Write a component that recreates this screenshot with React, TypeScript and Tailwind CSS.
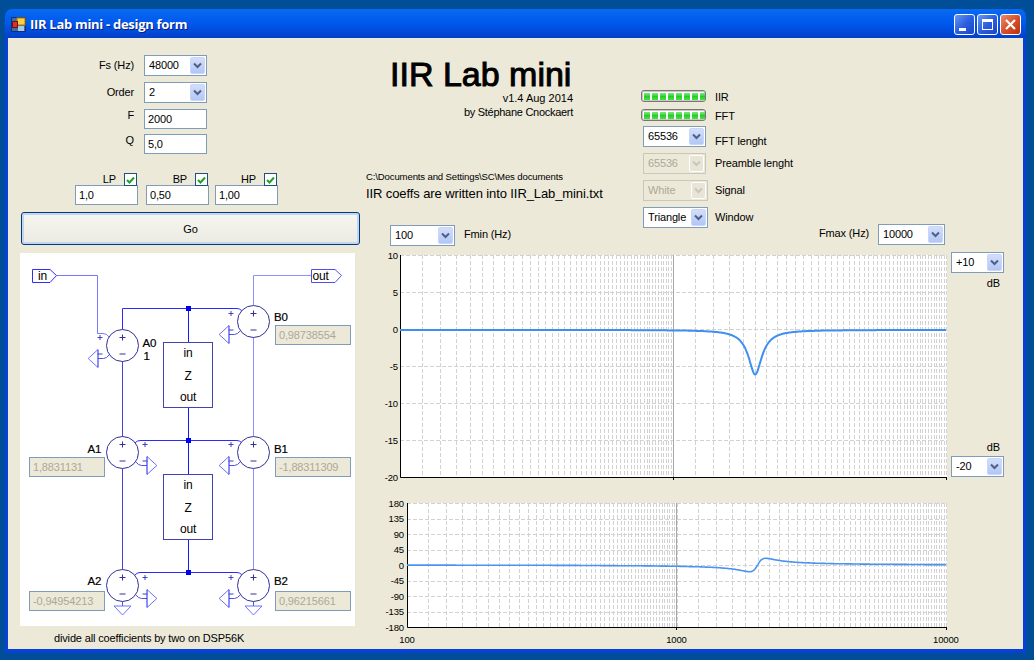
const B0 = 0.98738554;
const B1 = -1.88311309;
const B2 = 0.96215661;
const A1 = 1.8831131;
const A2 = -0.94954213;
const FS = 48000;

// frequency response of the biquad, gain in dB and phase in degrees
const response = (f: number) => {
  const w = (2 * Math.PI * f) / FS;
  const nr = B0 + B1 * Math.cos(w) + B2 * Math.cos(2 * w);
  const ni = -(B1 * Math.sin(w) + B2 * Math.sin(2 * w));
  const dr = 1 - A1 * Math.cos(w) - A2 * Math.cos(2 * w);
  const di = A1 * Math.sin(w) + A2 * Math.sin(2 * w);
  const db = 10 * Math.log10((nr * nr + ni * ni) / (dr * dr + di * di));
  const deg = ((Math.atan2(ni, nr) - Math.atan2(di, dr)) * 180) / Math.PI;
  return { db, deg };
};

const logX = (f: number, left: number, right: number) => left + ((right - left) * (Math.log10(f) - 2)) / 2;

const minorFreqs: number[] = [];
for (const decade of [100, 1000]) {
  for (let m = 1.2; m < 10.01; m += 0.2) minorFreqs.push(decade * m);
}

const sweep = Array.from({ length: 700 }, (_, i) => 100 * Math.pow(100, i / 699));

const Chevron = ({ disabled }: { disabled?: boolean }) => (
  <svg width="9" height="7" viewBox="0 0 9 7" className="block">
    <path d="M1 1.5 L4.5 5 L8 1.5" fill="none" stroke={disabled ? '#c9c7ba' : '#4d6185'} strokeWidth="2" />
  </svg>
);

const Combo = ({ value, className, disabled }: { value: string; className: string; disabled?: boolean }) => (
  <div
    className={`flex h-[21px] shrink-0 items-center justify-between border pl-[4px] pr-[1px] ${
      disabled ? 'border-[#c9c7ba] bg-[#ece9d8] text-[#aca899]' : 'border-[#7f9db9] bg-white text-black'
    } ${className}`}
  >
    <span>{value}</span>
    <div
      className={`flex h-[17px] w-[15px] items-center justify-center rounded-[2px] border ${
        disabled ? 'border-white bg-[#e8e5d6]' : 'border-[#c8d6fb] bg-gradient-to-b from-[#d3def9] to-[#b2c7f7]'
      }`}
    >
      <Chevron disabled={disabled} />
    </div>
  </div>
);

const TextBox = ({ value, className }: { value: string; className: string }) => (
  <input
    readOnly
    value={value}
    className={`h-[20px] border border-[#7f9db9] bg-white px-[3px] text-[11px] text-black outline-none ${className}`}
  />
);

const Coeff = ({ value, className }: { value: string; className: string }) => (
  <input
    readOnly
    value={value}
    className={`absolute h-[20px] w-[76px] border border-[#7f9db9] bg-[#ece9d8] px-[3px] text-[11px] text-[#aca899] outline-none ${className}`}
  />
);

const Check = ({ label }: { label: string }) => (
  <div className="flex h-[12px] items-start justify-end gap-[8px] pr-[1px]">
    <span className="leading-[13px]">{label}</span>
    <div className="relative z-10 flex h-[13px] w-[13px] items-center justify-center border border-[#1c5180] bg-white">
      <svg width="9" height="8" viewBox="0 0 9 8">
        <path d="M1 4 L3.5 6.5 L8 1.5" fill="none" stroke="#21a121" strokeWidth="2" />
      </svg>
    </div>
  </div>
);

const Progress = () => (
  <div className="flex h-[12px] w-[65px] items-center gap-[2px] overflow-hidden rounded-[3px] border border-[#777777] bg-white pl-[2px] shadow-[inset_0_0_0_1px_#c8c8c0]">
    {[0, 1, 2, 3, 4, 5, 6, 7].map((i) => (
      <div key={i} className="h-[7px] w-[6px] shrink-0 bg-gradient-to-b from-[#7ce87c] via-[#22d022] to-[#4cdc4c]" />
    ))}
  </div>
);

const Triangle = ({ tip, base, y }: { tip: number; base: number; y: number }) => (
  <>
    <path d={`M${base} ${y - 9} L${tip} ${y} L${base} ${y + 9}`} fill="none" stroke="#7070ff" />
    <path d={`M${base} ${y - 9} V${y + 9}`} stroke="#2020e8" />
  </>
);

const Sum = ({ cx, cy, dir }: { cx: number; cy: number; dir: 1 | -1 }) => {
  const base = cx + dir * 24.5;
  const sign = cx + dir * 22.5;
  const y = cy + 13;
  return (
    <g>
      <path d={`M${base} ${y} H${cx + dir * 19} Q${cx + dir * 16} ${y} ${cx + dir * 13} ${cy + 9}`} fill="none" stroke="#5050f0" />
      <Triangle tip={cx + dir * 34.3} base={base} y={y} />
      <circle cx={cx} cy={cy} r="16" fill="white" stroke="#303098" />
      <path d={`M${cx - 3} ${cy - 8} H${cx + 3} M${cx} ${cy - 11} V${cy - 5} M${cx - 3} ${cy + 8.5} H${cx + 3}`} stroke="#303098" />
      <path d={`M${sign - 2.5} ${cy - 8} H${sign + 2.5} M${sign} ${cy - 10.5} V${cy - 5.5} M${sign - 2.5} ${cy + 8.5} H${sign + 2.5}`} stroke="#4040c0" />
    </g>
  );
};

const DelayBox = ({ y }: { y: number }) => (
  <g>
    <rect x="163.5" y={y} width="49" height="65" fill="white" stroke="#4444b0" />
    <text x="188" y={y + 10.5} textAnchor="middle" dominantBaseline="central" className="text-[12px]">in</text>
    <text x="188" y={y + 33} textAnchor="middle" dominantBaseline="central" className="text-[12px]">Z</text>
    <text x="188" y={y + 54} textAnchor="middle" dominantBaseline="central" className="text-[12px]">out</text>
  </g>
);

const Node = ({ y }: { y: number }) => <rect x="186" y={y - 2.5} width="5" height="5" fill="#0000f0" />;

const Tag = ({ x, y, children }: { x: number; y: number; children: string }) => (
  <text x={x} y={y} dominantBaseline="central" stroke="black" strokeWidth="0.2" className="text-[11.5px]">{children}</text>
);

const Diagram = () => (
  <div className="relative ml-[12px] mt-[8px] h-[373px] w-[335px] bg-white">
    <svg width="335" height="373" viewBox="20 253 335 373" className="block">
      {/* wires */}
      <g fill="none" strokeWidth="1">
        <path d="M56.5 275.5 H97.5 V333.5 H103 Q107 333.5 109 337" stroke="#7777ff" />
        <path d="M253.5 305 V275.5 H311.5" stroke="#8f8fff" />
        <path d="M122.5 330 V308.5 H237 Q240 308.5 242 311" stroke="#2a2aff" />
        <path d="M135 443 Q137 440.5 140 440.5 H237 Q240 440.5 242 443" stroke="#2a2aff" />
        <path d="M135 575 Q137 572.5 140 572.5 H237 Q240 572.5 242 575" stroke="#2a2aff" />
        <path d="M188.5 308.5 V342 M188.5 407 V474 M188.5 539 V572" stroke="#1818f0" />
        <path d="M122.5 361 V437 M122.5 468 V570" stroke="#4444dd" />
        <path d="M253.5 337 V437 M253.5 468 V570" stroke="#8f8fff" />
        <path d="M122.5 601 V606 M253.5 601 V606" stroke="#5050f0" />
        <path d="M114 606 H131 L122.5 615 Z M245 606 H262 L253.5 615 Z" stroke="#7070ff" />
      </g>

      {/* ports */}
      <path d="M32.5 269.5 H50 L56.5 275.5 L50 282.5 H32.5 Z" fill="white" stroke="#3030f0" />
      <path d="M311.5 269.5 H335 L341.5 275.5 L335 282.5 H311.5 Z" fill="white" stroke="#5050f0" />
      <text x="38" y="276" dominantBaseline="central" className="text-[12px]">in</text>
      <text x="312.5" y="276" dominantBaseline="central" className="text-[12px]">out</text>

      <Sum cx={122.5} cy={345.5} dir={-1} />
      <Sum cx={253.5} cy={321.5} dir={-1} />
      <Sum cx={122.5} cy={452.5} dir={1} />
      <Sum cx={253.5} cy={452.5} dir={-1} />
      <Sum cx={122.5} cy={585.5} dir={1} />
      <Sum cx={253.5} cy={585.5} dir={-1} />

      <DelayBox y={342.5} />
      <DelayBox y={474.5} />
      <Node y={308.5} />
      <Node y={440.5} />
      <Node y={572.5} />

      <Tag x={142.5} y={342.5}>A0</Tag>
      <Tag x={143.5} y={355.5}>1</Tag>
      <Tag x={274} y={317}>B0</Tag>
      <Tag x={87.5} y={449}>A1</Tag>
      <Tag x={274} y={449}>B1</Tag>
      <Tag x={87.5} y={581}>A2</Tag>
      <Tag x={274} y={581}>B2</Tag>
    </svg>
    <Coeff value="0,98738554" className="left-[255px] top-[72px]" />
    <Coeff value="1,8831131" className="left-[9px] top-[204px]" />
    <Coeff value="-1,88311309" className="left-[255px] top-[204px]" />
    <Coeff value="-0,94954213" className="left-[9px] top-[338px]" />
    <Coeff value="0,96215661" className="left-[255px] top-[338px]" />
  </div>
);

const Grid = ({ left, right, top, bottom, rows }: { left: number; right: number; top: number; bottom: number; rows: number[] }) => {
  const decade = Math.floor(logX(1000, left, right)) + 0.5;
  return (
    <g>
      <rect x={left} y={top} width={right - left + 1} height={bottom - top} fill="white" />
      <g stroke="#d2d2d2" strokeDasharray="4 2" fill="none">
        {minorFreqs.map((f) => {
          const x = Math.round(logX(f, left, right)) + 0.5;
          return <path key={f} d={`M${x} ${top} V${bottom}`} />;
        })}
        {rows.map((y) => (
          <path key={y} d={`M${left} ${Math.round(y) + 0.5} H${right + 1}`} />
        ))}
      </g>
      <path d={`M${decade} ${top} V${bottom}`} stroke="#a8a8a8" />
      <path d={`M${left + 0.5} ${top} V${bottom + 0.5} H${right + 1}`} fill="none" stroke="black" />
      <path d={`M${right + 0.5} ${bottom} V${bottom + 3} M${decade} ${bottom} V${bottom + 3}`} stroke="black" />
    </g>
  );
};

const GainChart = () => {
  const labels = ['10', '5', '0', '-5', '-10', '-15', '-20'];
  const ys = labels.map((_, i) => 255 + i * 37);
  const points = sweep.map((f) => `${logX(f, 400, 946).toFixed(1)},${(330 - response(f).db * 7.4).toFixed(1)}`).join(' ');
  return (
    <svg width="591" height="232" viewBox="360 250 591 232" className="block">
      <Grid left={400} right={946} top={255} bottom={477} rows={ys} />
      {labels.map((label, i) => (
        <text key={label} x="398" y={ys[i] + 0.5} textAnchor="end" dominantBaseline="central" className="text-[9.5px]">{label}</text>
      ))}
      <polyline points={points} fill="none" stroke="#3f8ff0" strokeWidth="2" />
    </svg>
  );
};

const PhaseChart = () => {
  const labels = ['180', '135', '90', '45', '0', '-45', '-90', '-135', '-180'];
  const ys = labels.map((_, i) => 503 + i * 15.5);
  const points = sweep.map((f) => `${logX(f, 407, 946).toFixed(1)},${(565 - response(f).deg * 0.3444).toFixed(1)}`).join(' ');
  return (
    <svg width="591" height="150" viewBox="360 495 591 150" className="mt-[13px] block overflow-visible">
      <Grid left={407} right={946} top={503} bottom={627} rows={ys} />
      {labels.map((label, i) => (
        <text key={label} x="404" y={ys[i]} textAnchor="end" dominantBaseline="central" className="text-[9.5px]">{label}</text>
      ))}
      <polyline points={points} fill="none" stroke="#4a94f0" strokeWidth="1.6" />
      <text x="407" y="639" textAnchor="middle" dominantBaseline="central" className="text-[9.5px]">100</text>
      <text x="676.5" y="639" textAnchor="middle" dominantBaseline="central" className="text-[9.5px]">1000</text>
      <text x="933" y="639" dominantBaseline="central" className="text-[9.5px]">10000</text>
    </svg>
  );
};

const AppIcon = () => (
  <svg width="15" height="15" viewBox="0 0 15 15" className="block shrink-0">
    <rect x="0.5" y="0.5" width="14" height="14" fill="#3a6ea5" stroke="#12306a" />
    <rect x="6" y="1" width="8" height="7" fill="#ffd040" stroke="#a87a10" />
    <rect x="1.5" y="4.5" width="5" height="6" fill="#d8302a" stroke="#701010" />
    <rect x="7" y="9" width="6" height="5" fill="#a8c8ec" />
  </svg>
);

const WinButton = ({ children, close }: { children: React.ReactNode; close?: boolean }) => (
  <div
    className={`flex h-[21px] w-[21px] items-center justify-center rounded-[3px] border border-white ${
      close ? 'bg-gradient-to-br from-[#e88a6c] via-[#d8502a] to-[#b83010]' : 'bg-gradient-to-br from-[#6a96f0] via-[#2c5fe0] to-[#1c44c8]'
    }`}
  >
    {children}
  </div>
);

const FormRow = ({ label, className, labelClass, children }: { label: string; className?: string; labelClass?: string; children: React.ReactNode }) => (
  <div className={`flex items-center ${className ?? ''}`}>
    <span className={`w-[126px] text-right ${labelClass ?? ''}`}>{label}</span>
    <div className="ml-[10px] flex">{children}</div>
  </div>
);

export default function App() {
  return (
    <div className="h-[660px] w-[1034px] overflow-hidden bg-[#004e98] pl-[5px] pt-[9px] font-['Liberation_Sans',sans-serif] text-[11px] tracking-[-0.15px] text-black">
      <div className="flex h-[644px] w-[1021px] flex-col rounded-t-[7px] bg-[#0a3fd8] px-[3px] pb-[4px]">
        {/* title bar */}
        <div className="-mx-[3px] flex h-[29px] shrink-0 items-center rounded-t-[7px] bg-gradient-to-b from-[#0a6af0] via-[#0058ee] to-[#0240c8] pl-[6px] pr-[5px] pt-[2px]">
          <AppIcon />
          <span className="ml-[4px] font-['Open_Sans',sans-serif] text-[13px] font-bold tracking-[-0.3px] text-white [text-shadow:1px_1px_#0a1f80]">
            IIR Lab mini - design form
          </span>
          <div className="ml-auto flex gap-[2px]">
            <WinButton>
              <div className="mt-[9px] mr-[5px] h-[3px] w-[7px] bg-white" />
            </WinButton>
            <WinButton>
              <div className="h-[11px] w-[11px] border border-t-[3px] border-white" />
            </WinButton>
            <WinButton close>
              <svg width="13" height="13" viewBox="0 0 13 13">
                <path d="M2 2 L11 11 M11 2 L2 11" stroke="white" strokeWidth="2.2" />
              </svg>
            </WinButton>
          </div>
        </div>

        {/* client area */}
        <div className="flex h-[611px] bg-[#ece9d8]">
          {/* left column */}
          <div className="flex w-[352px] shrink-0 flex-col pt-[17px]">
            <FormRow label="Fs (Hz)"><Combo value="48000" className="w-[63px]" /></FormRow>
            <FormRow label="Order" className="mt-[6px]"><Combo value="2" className="w-[63px]" /></FormRow>
            <FormRow label="F" labelClass="self-start leading-[13px]" className="mt-[6px]"><TextBox value="2000" className="w-[63px]" /></FormRow>
            <FormRow label="Q" labelClass="self-start leading-[13px]" className="mt-[5px]"><TextBox value="5,0" className="w-[63px]" /></FormRow>

            <div className="ml-[67px] mt-[19px] flex">
              <div className="w-[63px]">
                <Check label="LP" />
                <TextBox value="1,0" className="w-[63px]" />
              </div>
              <div className="ml-[8px] w-[63px]">
                <Check label="BP" />
                <TextBox value="0,50" className="w-[63px]" />
              </div>
              <div className="ml-[6px] w-[63px]">
                <Check label="HP" />
                <TextBox value="1,00" className="w-[63px]" />
              </div>
            </div>

            <button className="ml-[13px] mt-[7px] h-[33px] w-[339px] rounded-[3px] border border-[#003c74] bg-gradient-to-b from-[#f6f6f0] to-[#ecebe2] pt-[1px] text-[11px] shadow-[inset_0_0_0_2px_#c4d4f4]">
              Go
            </button>

            <Diagram />
            <p className="ml-[46px] mt-[6px] leading-[13px]">divide all coefficients by two on DSP56K</p>
          </div>

          {/* right column */}
          <div className="flex min-w-0 flex-1 flex-col">
            <div className="flex h-[212px] shrink-0">
              <div className="flex w-[281px] shrink-0 flex-col pl-[6px]">
                <div className="ml-[24px] mt-[18px] w-[183px]">
                  <h1 className="h-[35px] text-[34px] leading-[36px] font-normal tracking-normal [-webkit-text-stroke:1px_black]">IIR Lab mini</h1>
                  <p className="h-[14px] text-right leading-[14px] tracking-normal">v1.4 Aug 2014</p>
                  <p className="h-[14px] text-right leading-[14px] tracking-[-0.28px]">by Stéphane Cnockaert</p>
                </div>
                <p className="mt-[52px] h-[12px] text-[9.6px] leading-[12px]">C:\Documents and Settings\SC\Mes documents</p>
                <p className="mt-[3px] h-[16px] text-[13px] leading-[16px] tracking-[-0.1px]">IIR coeffs are written into IIR_Lab_mini.txt</p>
                <div className="ml-[24px] mt-[23px] flex items-center gap-[9px]">
                  <Combo value="100" className="w-[65px]" />
                  <span className="mb-[3px]">Fmin (Hz)</span>
                </div>
              </div>

              <div className="flex w-[170px] shrink-0 flex-col pt-[52px]">
                <div className="flex h-[12px] items-start">
                  <div className="w-[74px]"><Progress /></div>
                  <span className="mt-[1px] leading-[12px]">IIR</span>
                </div>
                <div className="mt-[7px] flex h-[12px] items-start">
                  <div className="w-[74px]"><Progress /></div>
                  <span className="mt-[1px] leading-[12px]">FFT</span>
                </div>
                <div className="mt-[5px] flex items-start pl-[2px]">
                  <div className="w-[72px]"><Combo value="65536" className="w-[63px]" /></div>
                  <span className="mt-[9px] leading-[12px]">FFT lenght</span>
                </div>
                <div className="mt-[6px] flex items-center pl-[2px]">
                  <div className="w-[72px]"><Combo value="65536" disabled className="w-[63px]" /></div>
                  <span>Preamble lenght</span>
                </div>
                <div className="mt-[6px] flex items-center pl-[2px]">
                  <div className="w-[72px]"><Combo value="White" disabled className="w-[65px]" /></div>
                  <span>Signal</span>
                </div>
                <div className="mt-[6px] flex items-center pl-[2px]">
                  <div className="w-[72px]"><Combo value="Triangle" className="w-[65px]" /></div>
                  <span>Window</span>
                </div>
              </div>

              <div className="flex flex-1 items-end justify-end gap-[9px] pb-[5px] pr-[78px]">
                <span className="mb-[4px]">Fmax (Hz)</span>
                <Combo value="10000" className="w-[67px]" />
              </div>
            </div>

            <div className="flex">
              <div className="w-[591px] shrink-0">
                <GainChart />
                <PhaseChart />
              </div>
              <div className="mt-[2px] flex h-[225px] w-[53px] flex-col">
                <Combo value="+10" className="w-[53px]" />
                <span className="mt-[2px] pr-[4px] text-right">dB</span>
                <span className="mb-[1px] mt-auto pr-[4px] text-right">dB</span>
                <Combo value="-20" className="w-[53px]" />
              </div>
            </div>
          </div>
        </div>
      </div>
    </div>
  );
}
